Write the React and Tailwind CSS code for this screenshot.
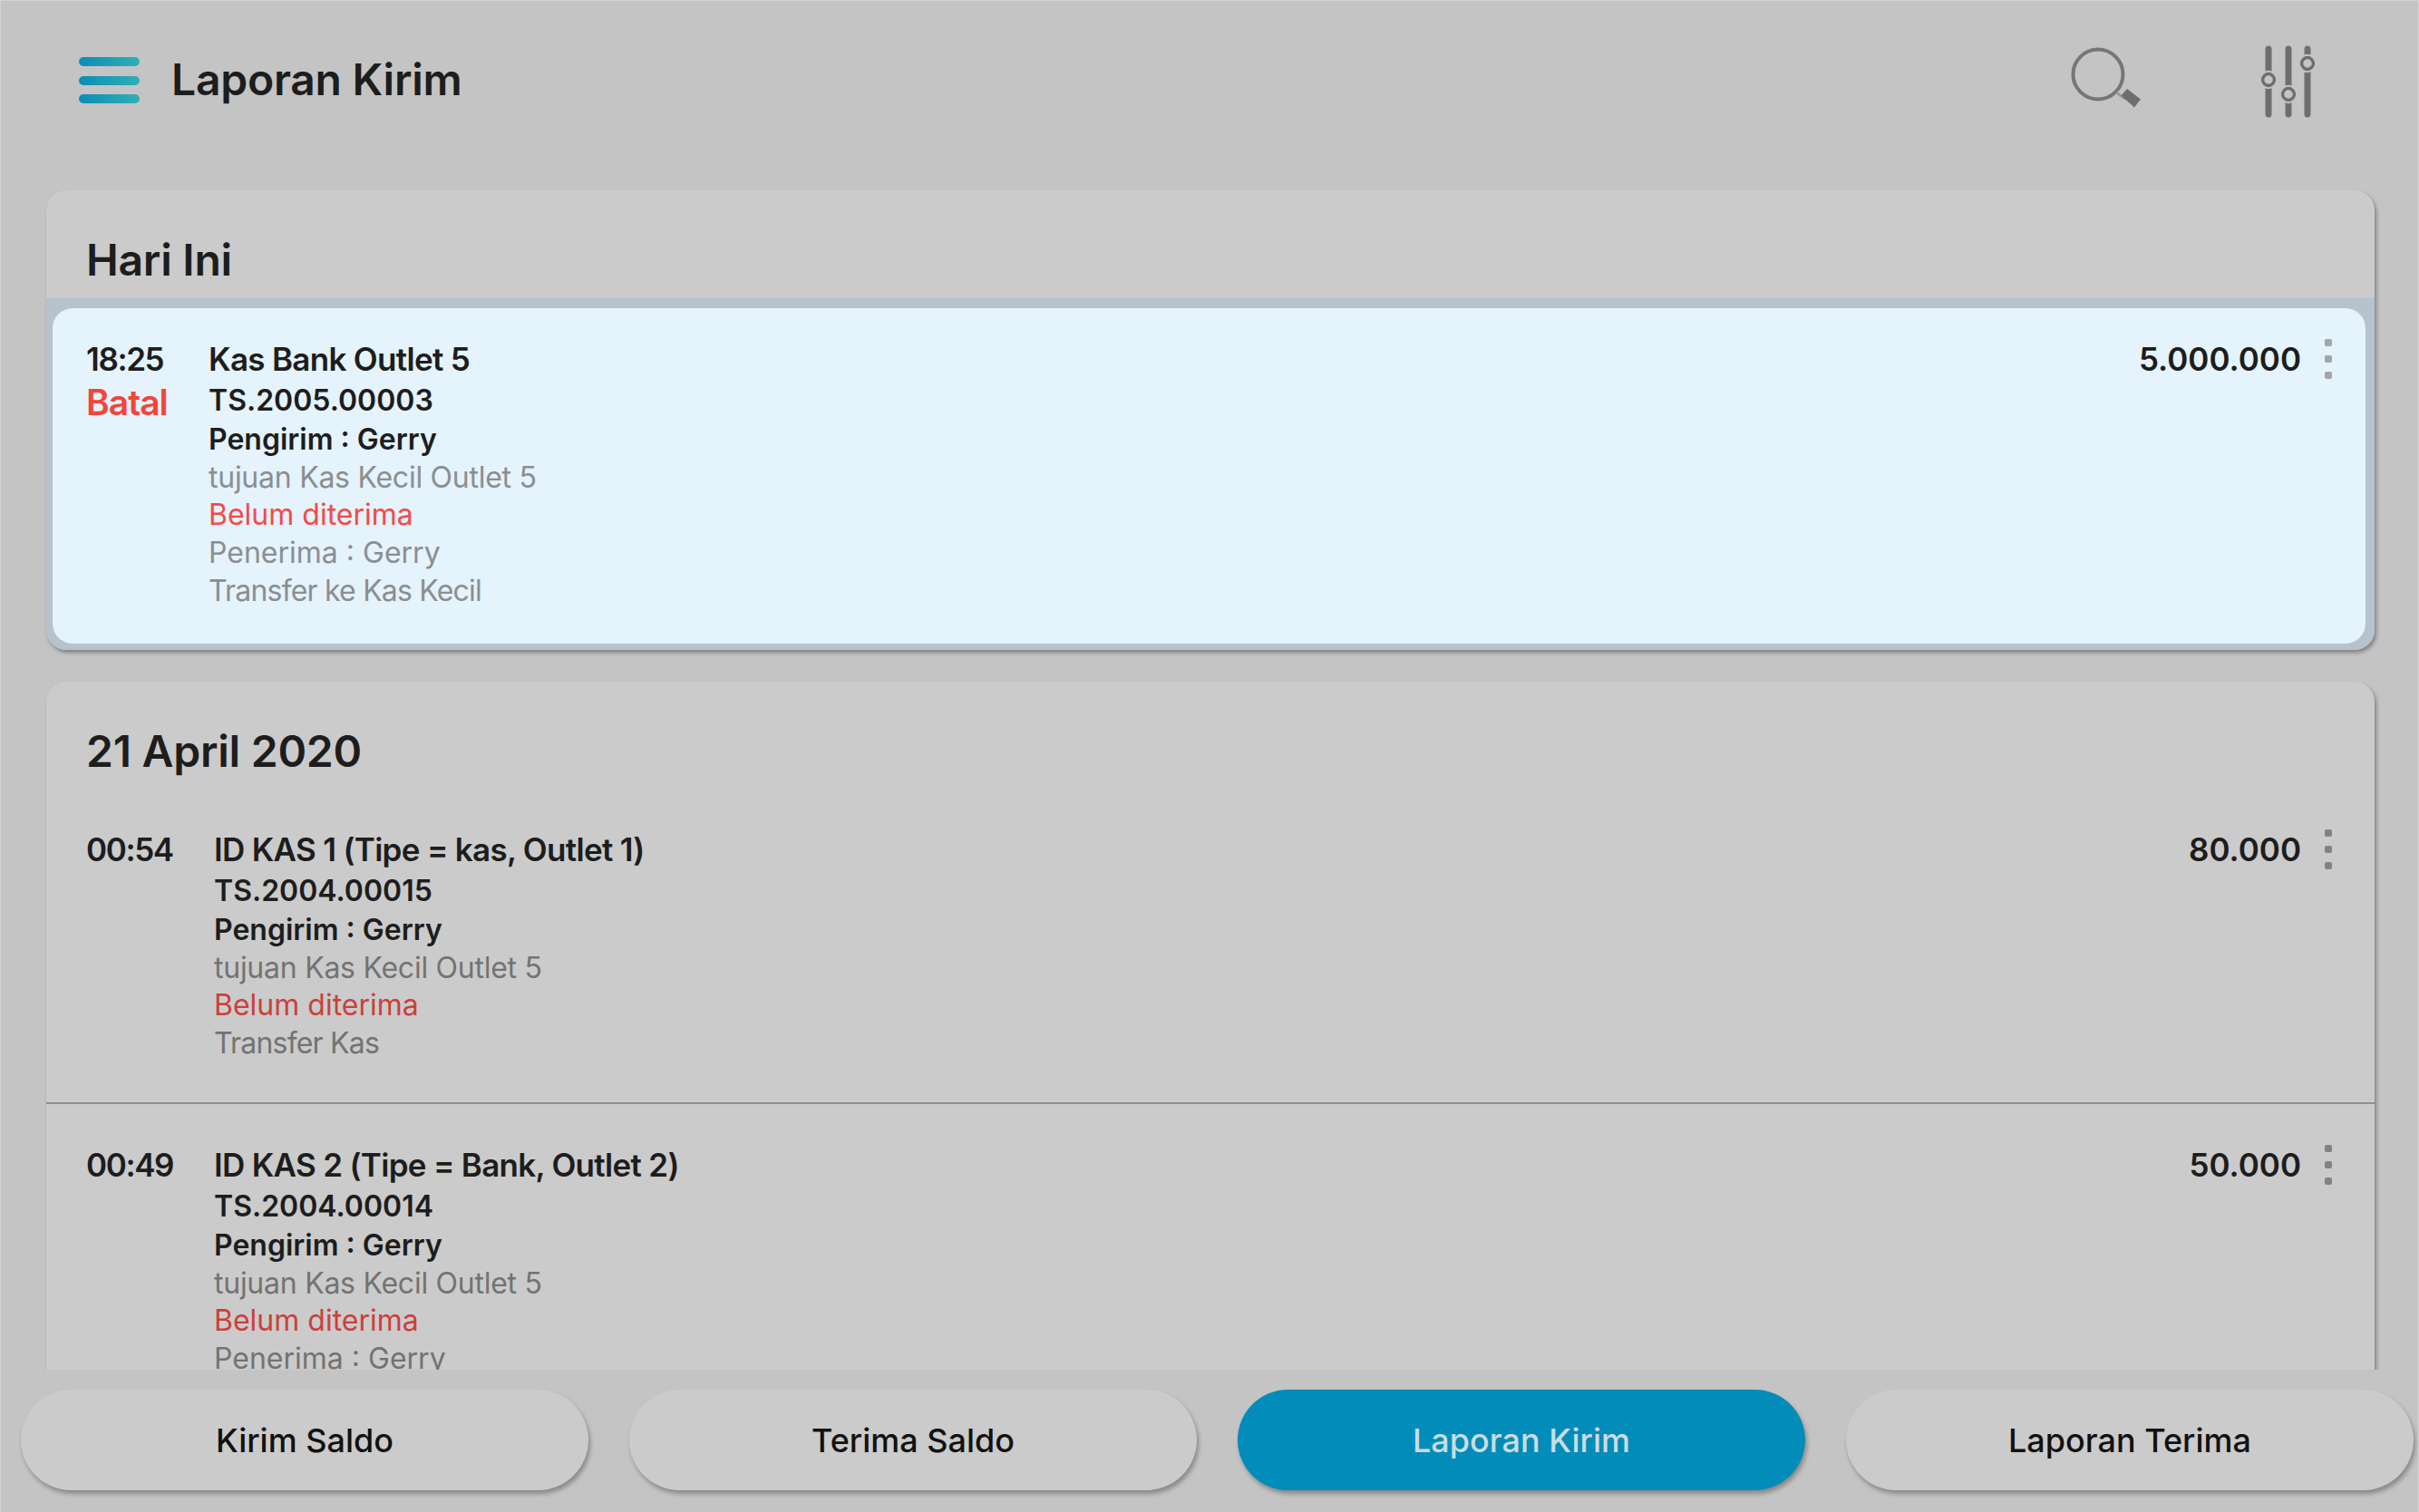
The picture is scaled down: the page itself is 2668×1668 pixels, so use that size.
const font = { fontFamily: '"Inter", "Roboto", "Liberation Sans", sans-serif' };

function Menu() {
  return (
    <svg width="67" height="52" viewBox="0 0 67 52" className="block">
      <defs>
        <linearGradient id="menuGrad" x1="0" y1="0" x2="1" y2="0">
          <stop offset="0" stopColor="#0b8db8" />
          <stop offset="1" stopColor="#2fb0b3" />
        </linearGradient>
      </defs>
      <rect x="0" y="0" width="67" height="10" rx="5" fill="url(#menuGrad)" />
      <rect x="0" y="21" width="67" height="10" rx="5" fill="url(#menuGrad)" />
      <rect x="0" y="41" width="67" height="10" rx="5" fill="url(#menuGrad)" />
    </svg>
  );
}

function Search() {
  return (
    <svg width="80" height="72" viewBox="0 0 80 72" className="block">
      <circle cx="30" cy="30" r="27.5" fill="none" stroke="#767676" strokeWidth="4" />
      <line x1="50" y1="50" x2="60" y2="57" stroke="#9a9a9a" strokeWidth="3" />
      <path d="M56.5 52 L63 44.5 L78 56 L71 65 Z" transform="translate(-1 1.5)" fill="#6e6e6e" />
    </svg>
  );
}

function Sliders() {
  const bg = '#c4c4c4';
  return (
    <svg width="62" height="80" viewBox="0 0 62 80" className="block">
      <g stroke="#6e6e6e" strokeWidth="7" strokeLinecap="round" fill="none">
        <line x1="9" y1="4" x2="9" y2="76" />
        <line x1="31" y1="4" x2="31" y2="76" />
        <line x1="52" y1="4" x2="52" y2="76" />
      </g>
      <g stroke="#6e6e6e" strokeWidth="3.5" fill={bg}>
        <circle cx="9" cy="38" r="6.5" />
        <circle cx="31" cy="54" r="6.5" />
        <circle cx="52" cy="20" r="6.5" />
      </g>
      <g fill="none" stroke={bg} strokeWidth="2">
        <circle cx="9" cy="38" r="9.2" />
        <circle cx="31" cy="54" r="9.2" />
        <circle cx="52" cy="20" r="9.2" />
      </g>
    </svg>
  );
}

function Dots({ color }) {
  return (
    <div className="flex flex-col gap-[10px] pt-[1px]">
      <span className={`block w-[8px] h-[8px] rounded-[2px] ${color}`} />
      <span className={`block w-[8px] h-[8px] rounded-[2px] ${color}`} />
      <span className={`block w-[8px] h-[8px] rounded-[2px] ${color}`} />
    </div>
  );
}

function Row({ time, batal, name, code, lines, amount, selected }) {
  const muted = selected ? 'text-[#8b8e91]' : 'text-[#737373]';
  const red = selected ? 'text-[#f44a48]' : 'text-[#cc3f3b]';
  return (
    <div className="flex items-start">
      <div className={selected ? 'w-[135px] shrink-0' : 'w-[141px] shrink-0'}>
        <div className="text-[35px] leading-[46px] font-semibold tracking-[-0.04em] text-[#1d1d1d]">{time}</div>
        {batal && <div className="text-[39px] leading-[50px] font-semibold tracking-[-0.025em] text-[#f4443c]">Batal</div>}
      </div>
      <div className="flex-1 min-w-0">
        <div className="text-[35px] leading-[46px] font-semibold tracking-[-0.02em] text-[#1d1d1d]">{name}</div>
        <div className="text-[32px] leading-[45px] font-semibold text-[#1d1d1d]">{code}</div>
        <div className="text-[32px] leading-[42px] font-semibold text-[#1d1d1d]">Pengirim : Gerry</div>
        <div className={`text-[32px] leading-[41px] tracking-[-0.008em] ${muted}`}>tujuan Kas Kecil Outlet 5</div>
        <div className={`text-[32px] leading-[42px] ${red}`}>Belum diterima</div>
        {lines.map((l) => (
          <div
            key={l}
            className={`text-[32px] leading-[42px] ${l.startsWith('Transfer') ? 'tracking-[-0.025em]' : ''} ${muted}`}
          >
            {l}
          </div>
        ))}
      </div>
      <div className="flex items-start gap-[26px]">
        <div className="text-[35px] leading-[46px] font-semibold text-[#1d1d1d]">{amount}</div>
        <Dots color={selected ? 'bg-[#a3a5a7]' : 'bg-[#828282]'} />
      </div>
    </div>
  );
}

function Heading({ children }) {
  return (
    <div className="h-[119px] pl-[44px] pt-[53px] text-[48px] leading-[48px] font-semibold tracking-[-0.005em] text-[#1d1d1d]">{children}</div>
  );
}

function NavButton({ children, active }) {
  return (
    <div
      className={`w-[626px] h-[111px] rounded-full flex items-center justify-center text-[36px] font-medium shadow-[2px_4px_5px_rgba(0,0,0,0.3)] ${
        active ? 'bg-[#028cba] text-[#cbdce2]' : 'bg-[#cbcbcb] text-[#111111]'
      }`}
    >
      {children}
    </div>
  );
}

export default function App() {
  return (
    <div
      style={font}
      className="w-[2668px] h-[1668px] flex flex-col overflow-hidden bg-[#c4c4c4] border-t border-l border-r border-[#d4d4d4] box-border"
    >
      <header className="h-[209px] shrink-0 flex items-start pl-[86px]">
        <div className="mt-[62px]"><Menu /></div>
        <h1 className="ml-[35px] mt-[60px] text-[48px] leading-[54px] font-semibold tracking-[-0.005em] text-[#1d1d1d]">Laporan Kirim</h1>
        <div className="ml-auto mt-[51px]"><Search /></div>
        <div className="ml-[129px] mr-[112px] mt-[49px]"><Sliders /></div>
      </header>

      <main className="flex-1 min-h-0 overflow-hidden pl-[50px] pr-[48px] flex flex-col gap-[35px]">
        <section className="rounded-[22px] bg-[#cbcbcb] shadow-[2px_3px_4px_rgba(0,0,0,0.35)] overflow-hidden shrink-0">
          <Heading>Hari Ini</Heading>
          <div className="bg-[#b6c2cc] pt-[11px] pb-[7px] pl-[7px] pr-[10px]">
            <div className="rounded-[22px] bg-[#e4f3fc] pt-[33px] pb-[37px] pl-[37px] pr-[37px]">
              <Row
                selected
                time="18:25"
                batal
                name="Kas Bank Outlet 5"
                code="TS.2005.00003"
                lines={['Penerima : Gerry', 'Transfer ke Kas Kecil']}
                amount="5.000.000"
              />
            </div>
          </div>
        </section>

        <section className="rounded-t-[22px] bg-[#cbcbcb] shadow-[2px_3px_4px_rgba(0,0,0,0.35)] shrink-0">
          <Heading>21 April 2020</Heading>
          <div className="pt-[43px] pb-[44px] pl-[44px] pr-[47px] border-b-2 border-[#8f8f8f]">
            <Row
              time="00:54"
              name="ID KAS 1 (Tipe = kas, Outlet 1)"
              code="TS.2004.00015"
              lines={['Transfer Kas']}
              amount="80.000"
            />
          </div>
          <div className="pt-[44px] pb-[43px] pl-[44px] pr-[47px]">
            <Row
              time="00:49"
              name="ID KAS 2 (Tipe = Bank, Outlet 2)"
              code="TS.2004.00014"
              lines={['Penerima : Gerry', 'Transfer ke Kas Kecil']}
              amount="50.000"
            />
          </div>
        </section>
      </main>

      <footer className="h-[157px] shrink-0 relative z-10 bg-[#c4c4c4] flex gap-[45px] pl-[22px] pt-[22px]">
        <NavButton>Kirim Saldo</NavButton>
        <NavButton>Terima Saldo</NavButton>
        <NavButton active>Laporan Kirim</NavButton>
        <NavButton>Laporan Terima</NavButton>
      </footer>
    </div>
  );
}
